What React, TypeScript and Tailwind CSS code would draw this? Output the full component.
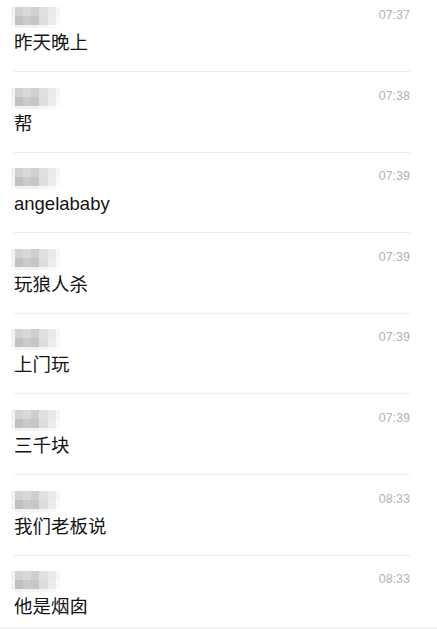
const messages = [
  { time: "07:37", text: "昨天晚上" },
  { time: "07:38", text: "帮" },
  { time: "07:39", text: "angelababy" },
  { time: "07:39", text: "玩狼人杀" },
  { time: "07:39", text: "上门玩" },
  { time: "07:39", text: "三千块" },
  { time: "08:33", text: "我们老板说" },
  { time: "08:33", text: "他是烟囱" },
];

const mosaicWidths = [4, 8, 8, 8, 9, 8, 4];
const mosaicRows = [
  { h: 9, colors: ["#f1f1f1", "#d2d2d2", "#d9d9d9", "#cfcfcf", "#e0e0e0", "#e9e9e9", "#f6f6f6"] },
  { h: 9, colors: ["#f3f3f3", "#c0c0c0", "#cacaca", "#c6c6c6", "#dddddd", "#ececec", "#fafafa"] },
  { h: 3, colors: ["#fbfbfb", "#f2f2f2", "#f3f3f3", "#f2f2f2", "#f6f6f6", "#f9f9f9", "#ffffff"] },
];

// blurred-out sender name
function Mosaic() {
  return (
    <div className="-ml-[3px] flex flex-col">
      {mosaicRows.map((row, r) => (
        <div key={r} className="flex">
          {row.colors.map((c, i) => (
            <div key={i} style={{ width: mosaicWidths[i], height: row.h, background: c }} />
          ))}
        </div>
      ))}
    </div>
  );
}

export default function App() {
  return (
    <main
      className="flex h-[629px] w-[437px] flex-col overflow-hidden bg-white"
      style={{ fontFamily: '"Liberation Sans", "Noto Sans CJK SC", sans-serif' }}
    >
      <div className="h-[627px] overflow-hidden">
        <ul className="-mt-[8.6px] ml-[14px] w-[396px]">
          {messages.map((m, i) => (
            <li key={i} className="flex h-[80.6px] flex-col border-b border-[#ededed] pt-[15.6px]">
              <div className="flex items-start justify-between">
                <Mosaic />
                <span className="text-[12.5px] leading-[16px] text-[#b3b3b3]">{m.time}</span>
              </div>
              <p className="mt-[2px] text-[18.5px] leading-[26px] text-[#141414]">{m.text}</p>
            </li>
          ))}
        </ul>
      </div>
      <div className="h-[2px] bg-[#f3f3f3]" />
    </main>
  );
}
